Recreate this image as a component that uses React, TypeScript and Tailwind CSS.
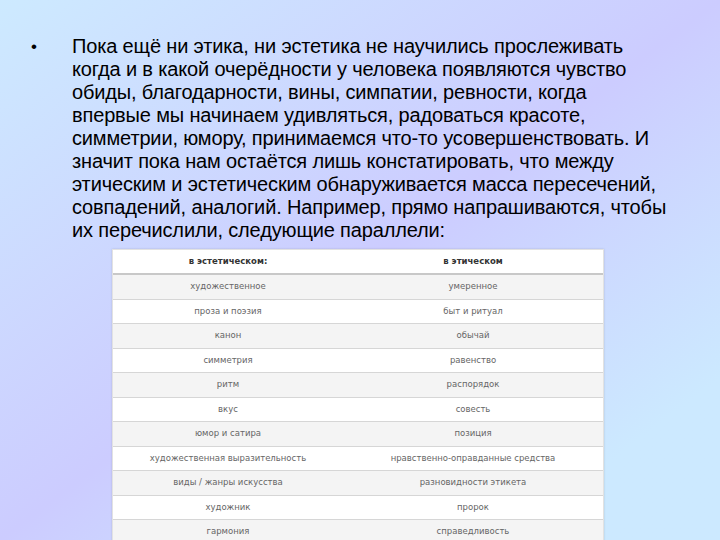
const lines = [
  'Пока ещё ни этика, ни эстетика не научились прослеживать',
  'когда и в какой очерёдности у человека появляются чувство',
  'обиды, благодарности, вины, симпатии, ревности, когда',
  'впервые мы начинаем удивляться, радоваться красоте,',
  'симметрии, юмору, принимаемся что-то усовершенствовать. И',
  'значит пока нам остаётся лишь констатировать, что между',
  'этическим и эстетическим обнаруживается масса пересечений,',
  'совпадений, аналогий. Например, прямо напрашиваются, чтобы',
  'их перечислили, следующие параллели:',
]

const rows: [string, string][] = [
  ['художественное', 'умеренное'],
  ['проза и поэзия', 'быт и ритуал'],
  ['канон', 'обычай'],
  ['симметрия', 'равенство'],
  ['ритм', 'распорядок'],
  ['вкус', 'совесть'],
  ['юмор и сатира', 'позиция'],
  ['художественная выразительность', 'нравственно-оправданные средства'],
  ['виды / жанры искусства', 'разновидности этикета'],
  ['художник', 'пророк'],
  ['гармония', 'справедливость'],
]

export default function App() {
  return (
    <div className="w-[720px] h-[540px] overflow-hidden bg-linear-to-br from-[#cdeaff] from-0% via-[#ccccff] via-50% to-[#cce9ff] to-85%">
      {/* bullet text */}
      <div className="flex pt-[35px] pl-[31px] text-[20px] leading-[23px] text-black" style={{ fontFamily: '"Liberation Sans", Arial, sans-serif' }}>
        <span className="w-[41px] shrink-0 text-[17px]">•</span>
        <div className="tracking-[-0.15px]">
          {lines.map((l) => (
            <div key={l} className="whitespace-nowrap">{l}</div>
          ))}
        </div>
      </div>

      {/* table */}
      <div className="ml-[112px] mt-[7px] w-[492px] bg-white border border-[#e2e2e2] shadow-[0_0_2px_rgba(0,0,0,0.15)] text-[8.5px] text-[#666]" style={{ fontFamily: '"DejaVu Sans", Verdana, sans-serif' }}>
        <div className="grid grid-cols-[230px_1fr] h-[25px] items-center border-b-2 border-[#c8c8c8] font-bold text-[#333]">
          <div className="text-center">в эстетическом:</div>
          <div className="text-center">в этическом</div>
        </div>
        {rows.map(([a, b], i) => (
          <div
            key={a}
            className={
              'grid grid-cols-[230px_1fr] h-[24.5px] items-center border-b border-[#d6d6d6] ' +
              (i % 2 === 0 ? 'bg-[#f4f4f4]' : 'bg-white')
            }
          >
            <div className="text-center">{a}</div>
            <div className="text-center">{b}</div>
          </div>
        ))}
      </div>
    </div>
  )
}
